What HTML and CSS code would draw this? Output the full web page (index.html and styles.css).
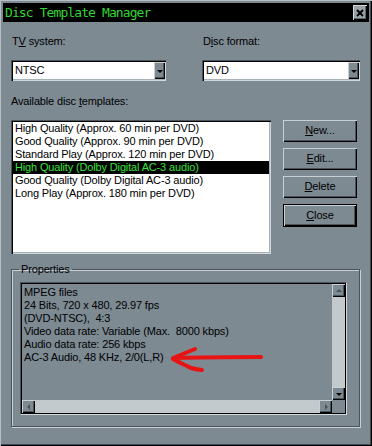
FILE: index.html
```html
<html>
<head>
<meta http-equiv="content-type" content="text/html; charset=utf-8">
<meta name="viewport" content="width=device-width, initial-scale=1">
<link rel="stylesheet" href="styles.css">
<title>Disc Template Manager</title>
</head>
<body>
<div class=window>
<div class=titlebar>
<span class=title>Disc Template Manager</span>
<span class=xbtn><svg width=8 height=8 viewBox="0 0 8 8"><path d="M1,1 L7,7 M7,1 L1,7" stroke="#000" stroke-width="2"/></svg></span>
</div>
<div class=main>
<div class=selects>
<div class=field>
<div class=label>T<u>V</u> system:</div>
<div class=combo><span class=value>NTSC</span><span class="sbtn down"></span></div>
</div>
<div class=field>
<div class=label>D<u>i</u>sc format:</div>
<div class=combo><span class=value>DVD</span><span class="sbtn down"></span></div>
</div>
</div>
<div class=caption>Available disc <u>t</u>emplates:</div>
<div class=templates>
<div class=list>
<div class=item>High Quality (Approx. 60 min per DVD)</div>
<div class=item>Good Quality (Approx. 90 min per DVD)</div>
<div class=item>Standard Play (Approx. 120 min per DVD)</div>
<div class="item sel">High Quality (Dolby Digital AC-3 audio)</div>
<div class=item>Good Quality (Dolby Digital AC-3 audio)</div>
<div class=item>Long Play (Approx. 180 min per DVD)</div>
</div>
<div class=buttons>
<div class=btn><u>N</u>ew...</div>
<div class=btn><u>E</u>dit...</div>
<div class=btn><u>D</u>elete</div>
<div class="btn default"><u>C</u>lose</div>
</div>
</div>
<fieldset class=group>
<legend>Properties</legend>
<div class=props>
<div class=props-in>
<div class=lines>
<div>MPEG files</div>
<div>24 Bits, 720 x 480, 29.97 fps</div>
<div>(DVD-NTSC),&nbsp; 4:3</div>
<div>Video data rate: Variable (Max.&nbsp; 8000 kbps)</div>
<div>Audio data rate: 256 kbps</div>
<div>AC-3 Audio, 48 KHz, 2/0(L,R)</div>
</div>
<div class=vscroll><span class="sbtn up"></span><span class=track></span><span class="sbtn down"></span></div>
<div class=hscroll><span class="sbtn left"></span><span class=track></span><span class="sbtn right"></span></div>
<div class=corner></div>
</div>
<svg class=note width=320 height=130 viewBox="0 0 320 130">
<g fill="none" stroke="#e81414" stroke-width="4" stroke-linecap="round" stroke-linejoin="round">
<path d="M241,75 C215,75 185,75 156,76"/>
<path d="M153,76 L175,67"/>
<path d="M153,77 C158,80 163,82 167,84 C170,86 172,87 182,88"/>
</g>
</svg>
</div>
</fieldset>
</div>
</div>
</body>
</html>
```

FILE: styles.css
```css
html,body{margin:0;padding:0}
body{background:#7d8a92;font-family:"Liberation Sans","Arial",sans-serif;font-size:11px;letter-spacing:-0.15px;line-height:13px;color:#000}
u{text-decoration:underline;text-underline-offset:1px}
.window{width:372px;height:446px;box-sizing:border-box;padding:2px;background:#7d8a92;
box-shadow:inset 1px 1px #b4bec4,inset -1px -1px #000,inset -2px -2px #404a50}
.titlebar{height:19px;margin:1px 1px 0 1px;background:#000;display:flex;align-items:center;justify-content:space-between;padding:0 2px 0 2px}
.title{font-family:"DejaVu Sans Mono",monospace;font-size:13px;letter-spacing:-0.9px;color:#33d633}
.xbtn{width:14px;height:15px;box-sizing:border-box;background:#98a4aa;display:flex;align-items:center;justify-content:center;
box-shadow:inset 1px 1px #d0d8dc,inset -1px -1px #000,inset -2px -2px #5a666c}
.main{padding:13px 10px 0 9px}
.selects{display:grid;grid-template-columns:155px 1fr;column-gap:36px}
.field{display:flex;flex-direction:column}
.label{margin-left:1px;margin-bottom:12px}
.combo{height:21px;box-sizing:border-box;background:#fff;display:flex;padding:2px 1px 1px 2px;
box-shadow:inset 1px 1px #4a545a,inset 2px 2px #000,inset -1px -1px #d0d8dc,inset -2px -2px #a8b2b6}
.combo .value{flex:1;padding-left:2px;line-height:17px}
.combo .sbtn{width:11px;height:17px}
.caption{margin:14px 0 12px 0}
.templates{display:flex;gap:12px;align-items:flex-start}
.list{width:260px;height:134px;box-sizing:border-box;background:#fff;padding:2px 2px 2px 2px;
box-shadow:inset 1px 1px #4a545a,inset 2px 2px #000,inset -1px -1px #d0d8dc,inset -2px -2px #a8b2b6}
.item{height:13px;padding-left:2px;white-space:nowrap}
.item.sel{background:#000;color:#3be03b}
.buttons{width:74px;display:flex;flex-direction:column;gap:6px}
.btn{height:22px;box-sizing:border-box;text-align:center;line-height:21px;
box-shadow:inset 1px 1px #c8d0d4,inset -1px -1px #000,inset -2px -2px #4a545a}
.btn.default{height:23px;border:1px solid #000;line-height:20px}
.group{margin:8px 0 0 0;padding:6px 12px 11px 8px;border:1px solid #4a545a;min-width:0;
box-shadow:inset 1px 1px #c8d0d4,1px 1px #c8d0d4}
.group legend{padding:0 2px;margin-left:-1px;line-height:14px}
.props{position:relative;height:133px;box-sizing:border-box;border:1px solid;border-color:#4a545a #d0d8dc #d0d8dc #4a545a}
.props-in{height:100%;box-sizing:border-box;border:1px solid #000;display:grid;grid-template-columns:1fr 13px;grid-template-rows:1fr 13px}
.lines{padding:2px 0 0 2px;white-space:nowrap;overflow:hidden}
.vscroll{display:flex;flex-direction:column}
.hscroll{display:flex}
.track{flex:1;background:#c2cace}
.corner{background:#7d8a92}
.sbtn{width:13px;height:13px;flex:none;box-sizing:border-box;background:#7d8a92;display:flex;align-items:center;justify-content:center;
box-shadow:inset 1px 1px #c8d0d4,inset -1px -1px #000,inset -2px -2px #4a545a}
.sbtn::after{content:"";width:0;height:0;border:3px solid transparent}
.sbtn.down::after{border-top:3px solid #000;border-bottom:0;margin-top:1px}
.sbtn.up::after{border-bottom:3px solid #4a545a;border-top:0}
.sbtn.left::after{border-right:3px solid #4a545a;border-left:0}
.sbtn.right::after{border-left:3px solid #4a545a;border-right:0;margin-left:1px}
.note{position:absolute;left:-1px;top:-1px;pointer-events:none}
```
